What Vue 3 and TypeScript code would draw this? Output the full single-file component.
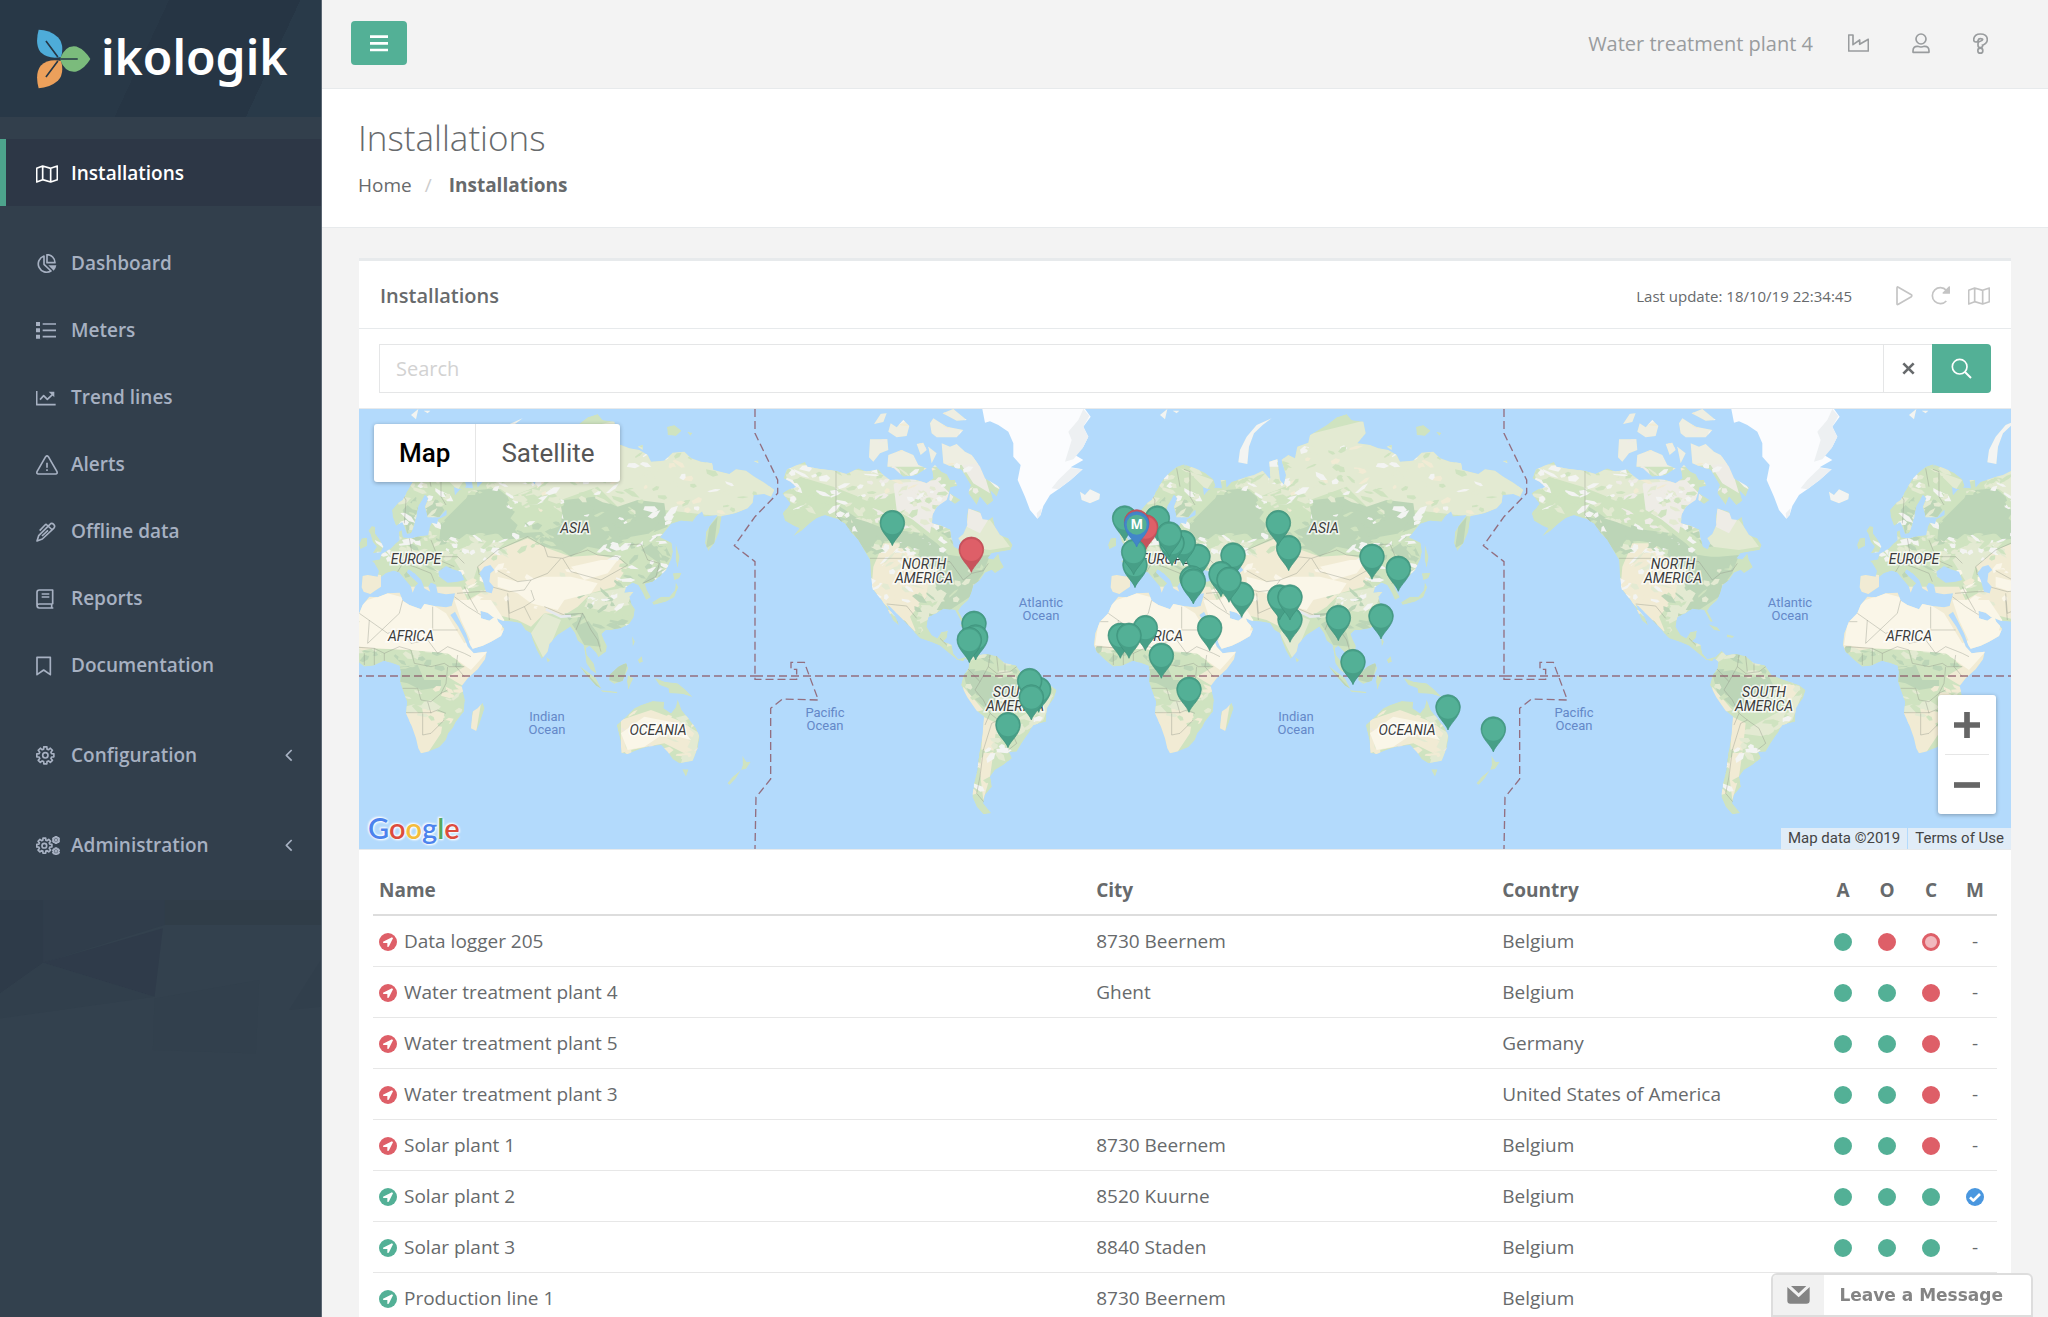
<script setup lang="ts">
import { ref } from 'vue'

type Tone = 'green' | 'red' | 'hollow'

interface NavItem {
  label: string
  icon: string
  active?: boolean
  expandable?: boolean
}

interface Installation {
  name: string
  city: string
  country: string
  marker: 'green' | 'red'
  states: Tone[]
  maintained?: boolean
}

interface Shard {
  d: string
  fill: string
}

// Outline of a cog wheel with the given centre, radius and number of teeth.
function cog(cx: number, cy: number, r: number, teeth: number): string {
  const points: string[] = []
  const step = (Math.PI * 2) / teeth
  for (let i = 0; i < teeth; i++) {
    const a = i * step - Math.PI / 2
    const spots: [number, number][] = [[-0.34, 0.74], [-0.22, 1], [0.22, 1], [0.34, 0.74]]
    for (const [offset, reach] of spots) {
      const x = cx + Math.cos(a + offset * step) * r * reach
      const y = cy + Math.sin(a + offset * step) * r * reach
      points.push(`${x.toFixed(1)} ${y.toFixed(1)}`)
    }
  }
  return `M${points.join('L')}Z`
}

const icons: Record<string, { w: number; h: number; body: string }> = {
  map: { w: 66, h: 54, body: '<path d="M2 10L20 3L44 10L64 3V44L44 51L20 44L2 51ZM20 3V44M44 10V51"/>' },
  pie: { w: 63, h: 60, body: '<path d="M24 6A25 25 0 1 0 45 51L24 31ZM33 2A24 24 0 0 1 57 26H33Z"/><path d="M37 34H61Q60 44 53 50Z" fill="currentColor" stroke="none"/>' },
  list: { w: 60, h: 51, body: '<path d="M20 6H60M20 25H60M20 44H60"/><path d="M0 0H12V12H0ZM0 19H12V31H0ZM0 38H12V50H0Z" fill="currentColor" stroke="none"/>' },
  trend: { w: 60, h: 48, body: '<path d="M2 3V44H59M12 29L23 17L34 28L50 13"/><path d="M38 5H55V22Z" fill="currentColor" stroke="none"/>' },
  alert: { w: 66, h: 60, body: '<path d="M29 5Q33 0 37 5L63 50Q65 57 59 57H7Q1 57 3 50ZM33 23V38M33 43V48" stroke-width="5"/>' },
  pen: { w: 60, h: 60, body: '<path d="M3 57L8 41L42 7Q47 1 53 7Q59 13 53 19L19 51ZM11 26L27 9Q30 6 33 9L49 24M36 25L18 42"/>' },
  book: { w: 54, h: 60, body: '<path d="M50 46V3H10Q3 3 3 10V49Q3 57 10 57H52M3 50Q3 45 10 45H50M47 46V57M17 15H40M17 24H40"/>' },
  bookmark: { w: 48, h: 60, body: '<path d="M3 4H43V56L23 42L3 56Z"/>' },
  gear: { w: 57, h: 57, body: `<path d="${cog(28, 28, 26, 8)}"/><circle cx="28" cy="28" r="8"/>` },
  gears: { w: 72, h: 57, body: `<path d="${cog(25, 29, 23, 8)}"/><circle cx="25" cy="29" r="7"/><path d="${cog(60, 12, 10, 6)}${cog(60, 46, 10, 6)}"/><circle cx="60" cy="12" r="2"/><circle cx="60" cy="46" r="2"/>` },
  left: { w: 24, h: 39, body: '<path d="M20 3L4 19L20 35" stroke-width="5"/>' },
  bars: { w: 54, h: 51, body: '<path d="M0 5H54M0 25H54M0 45H54" stroke-width="8"/>' },
  industry: { w: 63, h: 54, body: '<path d="M2 51V3H15V32L35 18V31L61 16V51Z" stroke-width="5"/>' },
  user: { w: 54, h: 63, body: '<circle cx="27" cy="18" r="15" stroke-width="5"/><path d="M3 58V54Q3 39 17 40Q27 44 37 40Q51 39 51 54V58Z" stroke-width="5"/>' },
  help: { w: 45, h: 63, body: '<path d="M9 20Q10 10 22 10Q36 10 36 20Q36 27 22 32V37" stroke-width="19" stroke-linecap="round"/><circle cx="22" cy="53" r="10" fill="currentColor" stroke="none"/><path d="M9 20Q10 10 22 10Q36 10 36 20Q36 27 22 32V37" stroke="#f3f3f3" stroke-width="9" stroke-linecap="round"/><circle cx="22" cy="53" r="5" fill="#f3f3f3" stroke="none"/>' },
  play: { w: 51, h: 60, body: '<path d="M3 6Q3 1 7 4L46 26Q49 29 46 32L7 55Q3 57 3 53Z"/>' },
  redo: { w: 57, h: 57, body: '<path d="M46 13A24 24 0 1 0 46 45" stroke-width="5"/><path d="M37 21H55V3Z" fill="currentColor"/>' },
  close: { w: 39, h: 39, body: '<path d="M4 4L35 35M35 4L4 35" stroke-width="8"/>' },
  search: { w: 63, h: 63, body: '<circle cx="26" cy="26" r="22" stroke-width="5"/><path d="M42 42L60 60" stroke-width="6"/>' },
  plus: { w: 78, h: 78, body: '<path d="M0 39H78M39 0V78" stroke-width="17"/>' },
  minus: { w: 78, h: 78, body: '<path d="M0 39H78" stroke-width="17"/>' },
  place: { w: 54, h: 54, body: '<circle cx="27" cy="27" r="27" fill="currentColor" stroke="none"/><path d="M39 13L12 26Q11 29 14 30H25V41Q28 43 30 40L42 16Z" fill="#fff" stroke="none"/>' },
  check: { w: 54, h: 54, body: '<circle cx="27" cy="27" r="27" fill="currentColor" stroke="none"/><path d="M12 28L22 38L42 18" stroke="#fff" stroke-width="8"/>' },
  mail: { w: 69, h: 54, body: '<path d="M12 0H58L35 22ZM1 3L35 34L68 3V44Q68 53 58 53H10Q1 53 1 44Z" fill="currentColor" stroke="none"/>' },
}

const navGroups: NavItem[][] = [
  [{ label: 'Installations', icon: 'map', active: true }],
  [
    { label: 'Dashboard', icon: 'pie' },
    { label: 'Meters', icon: 'list' },
    { label: 'Trend lines', icon: 'trend' },
    { label: 'Alerts', icon: 'alert' },
    { label: 'Offline data', icon: 'pen' },
    { label: 'Reports', icon: 'book' },
    { label: 'Documentation', icon: 'bookmark' },
  ],
  [{ label: 'Configuration', icon: 'gear', expandable: true }],
  [{ label: 'Administration', icon: 'gears', expandable: true }],
]

const rows: Installation[] = [
  { name: 'Data logger 205', city: '8730 Beernem', country: 'Belgium', marker: 'red', states: ['green', 'red', 'hollow'] },
  { name: 'Water treatment plant 4', city: 'Ghent', country: 'Belgium', marker: 'red', states: ['green', 'green', 'red'] },
  { name: 'Water treatment plant 5', city: '', country: 'Germany', marker: 'red', states: ['green', 'green', 'red'] },
  { name: 'Water treatment plant 3', city: '', country: 'United States of America', marker: 'red', states: ['green', 'green', 'red'] },
  { name: 'Solar plant 1', city: '8730 Beernem', country: 'Belgium', marker: 'red', states: ['green', 'green', 'red'] },
  { name: 'Solar plant 2', city: '8520 Kuurne', country: 'Belgium', marker: 'green', states: ['green', 'green', 'green'], maintained: true },
  { name: 'Solar plant 3', city: '8840 Staden', country: 'Belgium', marker: 'green', states: ['green', 'green', 'green'] },
  { name: 'Production line 1', city: '8730 Beernem', country: 'Belgium', marker: 'green', states: ['green', 'green', 'green'] },
]

const query = ref('')

// Coastlines, at three units to the pixel.
const americas = [
  'M100 235L112 208L165 185L172 200L215 208L255 212L290 222L325 205L350 215L385 208L400 225L420 240L470 238L500 240L530 250L550 235L545 205L555 195L575 215L590 222L600 240L615 240L622 258L602 262L595 285L590 300L560 320L548 345L546 370L575 378L600 388L603 410L612 440L626 447L634 430L625 415L640 402L652 375L650 352L655 325L690 335L698 358L715 360L728 350L735 380L750 405L775 415L788 435L782 450L750 455L725 460L712 475L730 478L745 460L750 480L762 502L735 520L725 510L705 518L690 540L670 555L665 575L655 600L635 618L625 632L642 665L634 665L615 630L580 626L560 640L535 650L530 680L545 705L562 715L574 696L594 692L590 715L580 724L605 735L610 760L625 778L648 770L640 784L622 780L600 762L570 737L545 727L510 715L490 692L465 665L440 640L418 618L410 614L420 632L436 650L448 677L430 662L415 632L395 600L368 568L362 520L360 480L345 455L325 420L305 400L285 370L260 356L225 345L200 355L180 370L155 392L128 410L148 385L132 378L105 362L98 340L122 312L97 280L118 268L140 262L122 245Z',
  'M645 775L668 752L680 765L710 762L740 768L765 790L798 796L818 825L850 838L900 855L920 870L912 895L890 925L888 965L850 975L835 1000L815 1030L800 1055L778 1056L785 1075L760 1095L735 1110L720 1130L726 1160L705 1185L700 1210L724 1240L700 1243L680 1220L667 1190L672 1150L682 1110L690 1050L698 1000L702 950L680 932L652 892L633 855L640 828L655 805L658 785Z',
  'M575 130L600 140L620 132L645 155L665 165L690 200L705 235L750 262L740 290L722 272L730 302L712 316L690 290L680 315L655 280L662 255L635 210L605 200L580 190Z',
  'M415 165L455 150L490 165L505 195L530 205L500 225L460 230L432 205L412 200Z',
  'M360 118L412 118L415 150L390 160L370 185L357 172Z',
  'M372 72L392 42L410 40L400 66ZM415 95L422 70L440 82L460 60L478 78L470 108L440 112ZM500 132L520 128L530 150L512 165ZM540 70L550 55L590 80L640 90L620 112L560 112L545 100ZM578 40L610 27L650 60L620 62ZM535 140L560 160L545 190ZM600 280L632 300L615 312L598 300Z',
  'M627 672L655 682L665 694L645 690ZM683 703L706 708L700 714L684 712Z',
]
const iceCap = 'M697 27L705 68L720 64L745 75L775 95L790 130L790 170L812 195L803 240L825 290L840 330L862 356L872 345L880 318L900 285L925 268L962 240L998 208L962 202L1000 180L975 165L1000 140L1015 110L1000 80L1022 50L1005 27Z'
const iceShade = 'M1000 27L1018 48L1000 80L1015 110L998 145L970 178L945 185L965 120L955 95L985 60ZM998 208L962 204L925 240L905 265L925 268L962 240ZM862 356L872 345L875 325L860 340Z'
const eurasia = [
  'M185 350L183 330L200 310L215 300L232 268L248 240L268 218L290 200L312 193L345 205L375 218L400 238L407 258L392 270L370 262L372 285L385 270L402 262L425 265L422 240L438 240L440 262L455 245L480 238L502 230L522 225L548 212L572 240L568 185L592 178L600 240L612 255L618 225L605 180L625 165L645 175L652 140L685 128L690 105L740 75L770 52L800 42L815 60L850 65L857 100L832 130L870 135L895 145L925 150L950 165L960 185L1000 182L1025 158L1060 155L1080 175L1110 185L1143 190L1147 210L1195 222L1215 208L1245 212L1270 230L1300 248L1330 270L1320 290L1300 282L1268 285L1265 308L1250 325L1215 340L1172 348L1165 395L1150 430L1132 453L1122 430L1125 395L1142 368L1160 345L1118 350L1114 332L1095 350L1085 365L1050 362L1020 372L998 400L988 412L1022 428L1026 455L1020 480L1005 510L985 530L965 545L942 552L948 570L960 592L945 600L935 578L922 556L905 548L885 562L880 578L908 575L895 590L900 610L912 628L908 652L895 672L870 685L842 690L825 690L812 702L818 718L828 738L825 755L802 772L795 758L775 738L765 745L768 765L788 790L797 822L780 810L766 790L762 760L757 735L740 722L732 700L718 680L700 692L680 705L655 732L650 755L632 777L618 752L605 720L600 700L583 690L570 670L545 665L515 662L485 650L470 638L448 632L450 655L475 662L495 648L502 665L520 685L510 708L480 725L455 737L425 746L418 735L405 700L385 660L372 635L358 645L382 680L400 715L410 740L428 760L467 755L462 778L440 808L410 835L392 858L402 900L398 935L375 965L365 985L352 1000L345 1020L325 1042L295 1054L270 1060L262 1045L255 1015L243 980L225 940L228 905L215 870L207 845L210 815L205 797L180 788L160 782L130 796L100 800L75 780L50 755L42 735L46 700L60 665L85 640L95 615L115 590L140 592L170 580L206 578L215 602L235 615L270 628L280 612L310 618L345 622L362 618L370 590L372 580L345 583L320 578L315 555L300 548L292 560L298 575L280 565L270 540L250 520L232 508L228 518L262 550L252 560L245 578L240 560L218 535L205 518L188 512L165 520L150 532L150 560L132 572L118 582L98 575L92 562L95 528L110 525L140 530L143 512L130 490L122 482L147 478L152 462L178 446L195 430L206 420L203 395L212 390L216 412L240 415L268 408L292 405L296 380L302 368L318 372L322 358L346 345L346 330L325 352L290 352L282 320L292 295L282 285L262 318L256 350L250 375L240 400L228 402L220 380L214 365L195 378Z',
  'M122 378L133 380L132 400L147 420L157 440L150 456L125 460L137 440L125 425L118 402L112 392ZM92 415L108 413L108 438L88 448L84 435Z',
  'M575 55L548 75L522 100L507 140L502 192L475 187L480 150L500 110L530 75Z',
  'M455 908L461 925L446 970L436 993L420 985L424 935L440 925Z',
  'M857 975L885 950L910 925L930 915L965 903L1000 905L998 925L1020 940L1034 922L1040 898L1052 930L1072 955L1095 985L1106 1010L1100 1045L1085 1082L1045 1090L1025 1078L1010 1055L990 1035L950 1040L920 1050L890 1062L872 1060L868 1020Z',
  'M1053 1108L1073 1108L1065 1131ZM1234 1066L1246 1085L1260 1085L1245 1107L1230 1110L1235 1095ZM1230 1110L1215 1135L1196 1155L1189 1150L1205 1130Z',
  'M970 833L1002 845L1040 850L1062 868L1086 892L1055 882L1015 880L1012 865L985 855ZM835 825L862 800L885 788L892 805L875 842L850 852L835 842ZM745 797L770 815L795 835L812 867L795 857L765 825ZM808 870L860 875L858 880L815 876ZM890 825L908 835L900 850L892 870L888 845ZM903 708L912 725L905 742ZM920 780L932 768L936 785L925 790Z',
  'M1015 590L1032 570L1034 545L1042 562L1030 592L1005 605L968 615L963 607L990 590ZM1025 520L1052 518L1045 535L1030 541ZM1034 430L1046 470L1040 505L1034 480ZM645 770L658 780L650 788Z',
  'M0 275L15 285L30 268L60 282L58 298L30 310L5 300Z',
  'M1008 80L1030 75L1052 92L1035 108L1010 105ZM920 140L935 135L935 150ZM1068 95L1085 98L1078 108ZM1268 183L1282 180L1282 190ZM240 45L262 27L255 58ZM278 32L298 32L290 40Z',
]
const inlandWater = 'M460 500L478 495L490 510L478 520L475 545L488 560L482 580L465 575L455 540L445 520ZM325 530L322 515L345 498L365 508L390 515L400 540L380 545L350 548ZM312 195L318 197L315 200Z'

// Country borders.
const americaBorders = 'M258 212V345L305 400M360 475H520L600 485L640 540L665 520L700 512L715 490M410 612L470 618L500 655M652 805L690 845L675 870L700 900L720 940L705 975M690 845L715 800L740 820L780 815L800 800M720 765L715 800M740 768L745 815M765 790V815M725 970L700 1050L690 1130L680 1180L705 1210M725 970L745 960L780 985L800 1030L775 1050M720 940L745 960M570 715L590 735'
const eurasiaBorders = 'M440 500L500 450L545 430L590 410L640 440L650 470L695 475L770 450L800 465L860 470L890 495M440 500L445 525M695 475L720 515L810 540L890 495M890 435L930 432L950 480L985 490L975 530L935 550M500 512L560 545L600 540L650 520L690 475M480 560L535 575L580 570L600 540M530 580L535 640L580 620L610 600L600 570M580 620L600 660M640 620L700 645L755 640L780 690L800 720L810 755M755 640L735 690M400 560L420 600L440 635M370 590L410 620L450 645M378 580L440 575L480 575M535 660L530 600M200 515L215 490L250 500L300 520L310 545M200 480L250 480L300 470L370 500M235 415L245 470M300 420L320 470L380 470L400 490M205 270L225 300L220 370M290 205L300 260M312 208L330 215V290L345 315M170 350M215 600L205 640L110 730M85 640L170 700L205 690M110 730L115 660M305 620V690H380M205 690L240 730L290 720L305 690M60 665H85M50 740L130 745L160 760L205 740L240 750L250 790L300 800L340 790L355 800L400 800M290 720L320 760L350 740L400 760L420 770M215 865H260L270 900L300 905L330 880L350 870M225 938H300L320 930L345 940M275 940V1005L300 1000L340 960M290 905L300 940M350 800L345 850L330 880M380 765L375 800L400 830M100 760V795M130 745V795M160 760V785'

const darkEurasia = 'M325 420L330 370L370 330L400 300L440 270L500 265L530 290L545 330L530 360L560 400L640 395L690 370L700 300L790 290L860 320L920 300L1000 310L1010 380L960 400L900 410L870 430L820 450L770 440L720 470L690 450L640 440L600 410L520 420L500 400L440 410L400 400L360 430L325 435ZM282 320L292 295L320 300L340 330L325 352L290 352ZM215 330L255 290L262 320L240 400L228 400ZM930 430L1000 430L1020 470L965 545L935 550L985 490ZM700 640L755 640L800 700L810 740L760 735L735 690ZM207 800L260 795L280 840L330 840L330 860L270 870L230 850L208 845ZM835 800L890 790L875 850L835 840ZM745 797L812 867L795 857ZM1135 380L1160 350L1150 430L1125 445Z'
// Unbroken taiga, drawn above the grain.
const taiga = 'M330 375L365 345L400 310L410 285L440 285L470 268L505 275L530 295L525 320L552 335L538 355L560 375L548 398L510 405L480 395L440 400L415 395L385 418L360 410L345 425L328 415ZM690 320L720 305L760 310L790 320L785 340L740 350L800 350L830 330L870 345L850 370L810 385L835 410L800 445L770 435L745 455L700 445L690 410L660 405L700 370ZM860 380L900 365L950 350L985 365L960 395L900 395ZM930 450L960 430L985 460L990 500L965 535L950 530L985 490Z'
const darkAmerica = 'M270 320L360 380L440 390L520 400L560 430L600 470L660 470L720 465L700 520L670 560L660 590L600 630L560 630L590 580L560 560L540 500L470 430L400 420L430 490L400 500L380 440L350 460L310 400L260 350ZM640 820L700 810L760 830L810 830L830 870L800 930L740 920L700 920L655 880ZM660 1090L690 1060L680 1120Z'
const borealAmerica = 'M300 350L350 365L400 385L440 392L500 405L540 430L530 455L480 440L440 420L395 425L380 405L370 440L345 440L325 400ZM530 460L600 465L660 475L700 470L690 505L640 510L590 490L560 500ZM650 830L700 815L740 835L790 835L800 870L770 880L720 900L680 885Z'
const sandAreas = 'M40 560L90 520L150 525L150 565L110 590L40 590ZM40 560L390 560L410 600L480 560L440 500L500 450L590 415L650 445L720 470L800 465L870 480L890 500L850 560L780 580L740 620L700 645L640 640L600 680L560 660L480 640L530 700L480 780L400 860L350 830L400 800L350 760L240 750L130 745L40 760ZM215 940L300 930L340 940L330 1000L290 1060L250 1060ZM430 910L450 910L435 1000L415 1000ZM870 960L960 930L1040 960L1090 1000L1060 1060L1000 1030L900 1050L870 1060Z'
const creamAreas = 'M60 640L110 600L170 580L310 618L345 640L400 730L460 700L520 690L500 740L465 760L420 810L350 760L240 750L130 745L45 735ZM370 600L480 600L520 660L500 720L430 745L390 660ZM500 530L560 545L640 530L720 530L800 550L780 580L700 600L680 630L600 610L560 580L500 560ZM870 1000L940 950L1040 970L1080 1020L1000 1000L940 1040L890 1050ZM720 500L810 480L860 480L830 520L760 540Z'
const sandAmerica = 'M370 500L400 430L470 430L490 480L540 510L530 590L480 650L500 700L470 670L400 610L365 560ZM700 950L740 970L730 1060L720 1130L700 1200L690 1120ZM640 860L700 930L680 935L640 890ZM840 860L880 850L900 870L870 910Z'
const tundra = 'M430 250L560 240L610 290L590 330L550 340L540 400L490 360L440 330ZM655 325L720 350L690 400L650 380ZM600 140L690 180L720 280L670 250Z'
const lightAreas = 'M460 230L700 100L860 60L1330 200L1330 300L1180 350L1000 330L860 320L800 260L690 300L640 250L540 290ZM370 480L440 430L520 430L440 500L420 560ZM640 640L690 660L640 780L600 700ZM780 580L900 560L900 600L850 640L760 620ZM220 920L300 900L330 920L290 960L230 950ZM1040 960L1106 1000L1090 1085L1050 1090L1070 1020ZM300 205L400 240L380 270L340 230Z'
const lightAmerica = 'M95 190L260 200L520 240L540 250L430 280L350 300L250 260L150 230L120 260ZM560 400L720 360L780 440L720 450L640 440ZM540 490L600 580L560 640L500 650L530 590ZM720 1000L850 930L910 880L880 960L800 1010ZM480 370L600 470L560 490L470 400Z'

// Small deterministic fragments that give the terrain its grain.
let seed = 41
function next(): number {
  seed = (seed * 16807) % 2147483647
  return seed / 2147483647
}
function grain(count: number, x: number, y: number, w: number, h: number, fills: string[]): Shard[] {
  return Array.from({ length: count }, () => {
    const cx = x + next() * w
    const cy = y + next() * h
    const turn = (next() - 0.5) * 1.6
    const long = 10 + next() * 24
    const thin = 3 + next() * 8
    const pts = [0, 1, 2, 3, 4].map((i) => {
      const a = (i / 5) * Math.PI * 2
      const px = Math.cos(a) * long * (0.5 + next() * 0.5)
      const py = Math.sin(a) * thin
      return `${Math.round(cx + px * Math.cos(turn) - py * Math.sin(turn))} ${Math.round(cy + px * Math.sin(turn) + py * Math.cos(turn))}`
    })
    return { d: `M${pts.join('L')}Z`, fill: fills[Math.floor(next() * fills.length)] }
  })
}

const white = '#f3f4f2'
const pale = '#e3ead2'
const leaf = '#cfe3c0'
const forest = '#bcd5b7'
const sand = '#f1ebd4'
const eurasiaGrain: Shard[] = [
  ...grain(130, 560, 130, 780, 210, [white, leaf, pale, leaf, pale, sand]),
  ...grain(60, 420, 235, 260, 90, [white, leaf, pale]),
  ...grain(60, 540, 340, 500, 110, [white, leaf, forest, leaf]),
  ...grain(40, 350, 400, 180, 80, [white, leaf, pale]),
  ...grain(50, 190, 200, 160, 220, [white, leaf, pale]),
  ...grain(50, 140, 410, 240, 120, [white, leaf, forest, pale]),
  ...grain(40, 380, 500, 340, 130, [sand, '#faf6e9', pale]),
  ...grain(35, 720, 560, 190, 120, [white, leaf, forest, pale]),
  ...grain(40, 850, 420, 170, 130, [leaf, forest, white]),
  ...grain(30, 50, 750, 350, 60, [leaf, forest, pale]),
  ...grain(26, 210, 860, 190, 130, [leaf, pale, sand]),
  ...grain(30, 860, 920, 240, 160, [pale, sand, '#ece8e0']),
]
const americaGrain: Shard[] = [
  ...grain(90, 100, 190, 270, 200, [white, leaf, pale, leaf]),
  ...grain(60, 350, 210, 230, 170, [pale, '#eeece6', leaf]),
  ...grain(50, 330, 380, 300, 80, [white, leaf, forest]),
  ...grain(45, 360, 440, 160, 200, [sand, pale, white]),
  ...grain(40, 500, 480, 220, 150, [leaf, forest, pale]),
  ...grain(50, 360, 27, 380, 280, [white, sand, '#eeece6']),
  ...grain(25, 430, 640, 180, 120, [leaf, pale, forest]),
  ...grain(40, 650, 760, 260, 130, [leaf, forest, pale]),
  ...grain(30, 720, 880, 190, 200, [leaf, pale, white]),
  ...grain(16, 660, 1040, 70, 200, [white, leaf, sand]),
]

const dateLine = 'M1272 27V100L1340 240V280L1272 350L1210 437L1272 485V838H1397V808H1380V787H1420L1462 900L1355 897L1319 925V1137L1275 1192L1272 1347'

const worldOffsets = [-357, 392, 1141]

const continents = [
  { x: 174, y: 169, lines: ['NORTH', 'AMERICA'] },
  { x: 265, y: 297, lines: ['SOUTH', 'AMERICA'] },
  { x: 574, y: 133, lines: ['ASIA'] },
  { x: 415, y: 164, lines: ['EUROPE'] },
  { x: 410, y: 241, lines: ['AFRICA'] },
  { x: 657, y: 335, lines: ['OCEANIA'] },
]
const oceans = [
  { x: 291, y: 207, lines: ['Atlantic', 'Ocean'] },
  { x: 75, y: 317, lines: ['Pacific', 'Ocean'] },
  { x: 546, y: 321, lines: ['Indian', 'Ocean'] },
]

// Pin tips, in the same units as the Eurasian coastline.
const pins: [number, number, string][] = [
  [-563, 437, 'green'], [-326, 517, 'red'], [-318, 739, 'green'], [-313, 780, 'green'], [-332, 788, 'green'],
  [-124, 937, 'green'], [-151, 911, 'green'], [-146, 960, 'green'], [-216, 1043, 'green'],
  [134, 423, 'green'], [232, 423, 'green'], [197, 450, 'red'], [170, 435, 'red'],
  [165, 563, 'green'], [161, 524, 'green'], [354, 538, 'green'], [310, 497, 'green'], [276, 497, 'green'], [268, 471, 'green'],
  [336, 603, 'green'], [340, 612, 'green'], [459, 534, 'green'], [485, 652, 'green'], [423, 590, 'green'], [447, 607, 'green'],
  [626, 512, 'green'], [595, 437, 'green'], [876, 538, 'green'], [955, 574, 'green'], [630, 727, 'green'],
  [599, 660, 'green'], [630, 660, 'green'], [775, 722, 'green'], [903, 717, 'green'], [389, 752, 'green'],
  [196, 752, 'green'], [121, 775, 'green'], [147, 775, 'green'], [244, 835, 'green'], [327, 937, 'green'],
  [819, 854, 'green'], [1104, 990, 'green'], [1240, 1056, 'green'], [170, 441, 'blue'],
]
</script>

<template>
  <div class="app">
    <aside class="sidebar">
      <a class="brand" href="#">
        <svg class="brand-mark" viewBox="0 0 166 180" aria-hidden="true">
          <path d="M8 2Q40 2 66 24Q86 44 76 84Q38 92 14 70Q-4 46 8 2Z" fill="#4eacd9" />
          <path d="M8 178Q40 178 66 156Q86 136 76 96Q38 88 14 110Q-4 134 8 178Z" fill="#eca05b" />
          <path d="M164 90Q148 62 122 52Q88 46 72 90Q88 134 122 128Q148 118 164 90Z" fill="#7bbb7c" />
          <path d="M66 84L30 36M66 96L30 144M72 90H126" stroke="#263746" stroke-width="5" />
        </svg>
        <span>ikologik</span>
      </a>
      <nav class="nav">
        <ul v-for="(group, g) in navGroups" :key="g">
          <li v-for="item in group" :key="item.label" :class="{ active: item.active }">
            <a href="#">
              <span class="nav-icon">
                <svg class="icon" :width="icons[item.icon].w / 3" :height="icons[item.icon].h / 3" :viewBox="`0 0 ${icons[item.icon].w} ${icons[item.icon].h}`" v-html="icons[item.icon].body" />
              </span>
              <span class="nav-label">{{ item.label }}</span>
              <svg v-if="item.expandable" class="icon" width="8" height="13" viewBox="0 0 24 39" v-html="icons.left.body" />
            </a>
          </li>
        </ul>
      </nav>
      <svg class="facets" viewBox="0 0 966 1250" preserveAspectRatio="none" aria-hidden="true">
        <path d="M0 0H130V188L0 280Z" fill="#2e3b49" />
        <path d="M130 0H495V75L130 188Z" fill="#303d4b" />
        <path d="M130 188L490 85L465 290Z" fill="#2f3b4a" />
        <path d="M0 280L130 188L465 290L0 355Z" fill="#313f4c" />
        <path d="M495 0H966V75H495Z" fill="#303d48" />
        <path d="M465 295L780 240L770 460L460 450Z" fill="#32404d" />
        <path d="M966 180L870 330L966 320Z" fill="#313f4c" />
      </svg>
    </aside>

    <main class="main">
      <header class="topbar">
        <button class="menu" type="button" aria-label="Toggle menu">
          <svg class="icon" width="18" height="17" viewBox="0 0 54 51" v-html="icons.bars.body" />
        </button>
        <div class="account">
          <span>Water treatment plant 4</span>
          <a v-for="name in ['industry', 'user', 'help']" :key="name" href="#" :aria-label="name">
            <svg class="icon" :width="icons[name].w / 3" :height="icons[name].h / 3" :viewBox="`0 0 ${icons[name].w} ${icons[name].h}`" v-html="icons[name].body" />
          </a>
        </div>
      </header>

      <section class="heading">
        <h1>Installations</h1>
        <ol class="crumbs">
          <li><a href="#">Home</a></li>
          <li class="slash">/</li>
          <li><strong>Installations</strong></li>
        </ol>
      </section>

      <section class="panel">
        <div class="panel-title">
          <h2>Installations</h2>
          <div class="tools">
            <span>Last update: 18/10/19 22:34:45</span>
            <button v-for="name in ['play', 'redo', 'map']" :key="name" type="button" :aria-label="name">
              <svg class="icon" :width="icons[name].w / 3" :height="icons[name].h / 3" :viewBox="`0 0 ${icons[name].w} ${icons[name].h}`" v-html="icons[name].body" />
            </button>
          </div>
        </div>

        <form class="search" @submit.prevent>
          <input v-model="query" type="text" placeholder="Search" aria-label="Search" />
          <button class="clear" type="button" aria-label="Clear" @click="query = ''">
            <svg class="icon" width="13" height="13" viewBox="0 0 39 39" v-html="icons.close.body" />
          </button>
          <button class="go" type="submit" aria-label="Search">
            <svg class="icon" width="21" height="21" viewBox="0 0 63 63" v-html="icons.search.body" />
          </button>
        </form>

        <div class="map">
          <svg class="world" viewBox="0 0 1654 440" preserveAspectRatio="xMidYMid slice">
            <defs>
              <clipPath id="america-clip"><path :d="americas.join('')" /></clipPath>
              <clipPath id="eurasia-clip"><path :d="eurasia.join('')" /></clipPath>
              <g id="world-tile">
                <g transform="scale(0.33333)">
                  <path :d="iceCap" fill="#fbfcfe" />
                  <path :d="iceShade" fill="#edf0f2" />
                  <g clip-path="url(#america-clip)">
                    <path :d="americas.join('')" :fill="leaf" />
                    <path :d="lightAmerica" :fill="pale" />
                    <path :d="darkAmerica" :fill="forest" />
                    <path :d="sandAmerica" :fill="sand" />
                    <path :d="tundra" fill="#eeece6" />
                    <path d="M350 27H760V190H700L560 200H350Z" fill="#eeeee2" />
                    <path v-for="(s, i) in americaGrain" :key="i" :d="s.d" :fill="s.fill" />
                    <path :d="borealAmerica" :fill="forest" />
                    <path :d="americaBorders" class="border" />
                  </g>
                  <g transform="translate(990 0)">
                    <g clip-path="url(#eurasia-clip)">
                      <path :d="eurasia.join('')" :fill="leaf" />
                      <path :d="lightAreas" :fill="pale" />
                      <path d="M470 40H600V200H470ZM0 260H70V320H0ZM230 20H300V60H230Z" :fill="white" />
                      <path :d="sandAreas" :fill="sand" />
                      <path :d="darkEurasia" :fill="forest" />
                      <path v-for="(s, i) in eurasiaGrain" :key="i" :d="s.d" :fill="s.fill" />
                      <path :d="taiga" :fill="forest" />
                      <path :d="creamAreas" fill="#faf6e8" />
                      <path :d="eurasiaBorders" class="border" />
                    </g>
                    <path d="M645 628L690 650L720 648" fill="none" stroke="#e6e9ee" stroke-width="8" />
                    <path :d="inlandWater" fill="#b3dafc" />
                    <path :d="dateLine" class="dateline" />
                  </g>
                  <path d="M15 828H2262" class="equator" />
                </g>
                <g class="continents">
                  <text v-for="c in continents" :key="c.lines[0]" :y="c.y">
                    <tspan v-for="(line, i) in c.lines" :key="line" :x="c.x" :dy="i * 14">{{ line }}</tspan>
                  </text>
                </g>
                <g class="oceans">
                  <text v-for="o in oceans" :key="o.lines[0]" :y="o.y">
                    <tspan v-for="(line, i) in o.lines" :key="line" :x="o.x" :dy="i * 13">{{ line }}</tspan>
                  </text>
                </g>
              </g>
            </defs>
            <use v-for="x in worldOffsets" :key="x" href="#world-tile" :x="x" y="-9" />
            <g transform="translate(722 -9) scale(0.33333)">
              <g v-for="([x, y, tone], i) in pins" :key="i" :class="['pin', tone]" :transform="`translate(${x} ${y})`">
                <path d="M0 0C-6 -20 -37 -40 -37 -69A37 37 0 0 1 37 -69C37 -40 6 -20 0 0Z" />
                <circle cy="-67" r="33" />
                <text v-if="tone === 'blue'" y="-54">M</text>
              </g>
            </g>
          </svg>

          <div class="map-type">
            <button type="button" class="chosen">Map</button>
            <button type="button">Satellite</button>
          </div>
          <div class="zoom">
            <button type="button" aria-label="Zoom in"><svg class="icon" width="26" height="26" viewBox="0 0 78 78" v-html="icons.plus.body" /></button>
            <button type="button" aria-label="Zoom out"><svg class="icon" width="26" height="26" viewBox="0 0 78 78" v-html="icons.minus.body" /></button>
          </div>
          <a class="google" href="#" aria-label="Google"><span class="b">G</span><span class="r">o</span><span class="y">o</span><span class="b">g</span><span class="g">l</span><span class="r">e</span></a>
          <div class="credits"><span>Map data ©2019</span><a href="#">Terms of Use</a></div>
        </div>

        <div class="table-wrap">
          <table>
            <colgroup><col /><col class="city" /><col class="country" /><col class="state" /><col class="state" /><col class="state" /><col class="state" /></colgroup>
            <thead>
              <tr><th>Name</th><th>City</th><th>Country</th><th class="mid">A</th><th class="mid">O</th><th class="mid">C</th><th class="mid">M</th></tr>
            </thead>
            <tbody>
              <tr v-for="row in rows" :key="row.name">
                <td>
                  <span class="name">
                    <svg :class="['icon', row.marker]" width="18" height="18" viewBox="0 0 54 54" v-html="icons.place.body" />
                    {{ row.name }}
                  </span>
                </td>
                <td>{{ row.city }}</td>
                <td>{{ row.country }}</td>
                <td v-for="(tone, i) in row.states" :key="i" class="mid"><span :class="['dot', tone]" /></td>
                <td class="mid">
                  <svg v-if="row.maintained" class="icon blue" width="18" height="18" viewBox="0 0 54 54" v-html="icons.check.body" />
                  <template v-else>-</template>
                </td>
              </tr>
            </tbody>
          </table>
        </div>
      </section>
    </main>

    <button class="chat" type="button">
      <span class="chat-icon"><svg class="icon" width="23" height="18" viewBox="0 0 69 54" v-html="icons.mail.body" /></span>
      <span class="chat-label">Leave a Message</span>
    </button>
  </div>
</template>

<style>
body {
  margin: 0;
  background: #f3f3f3;
}
</style>

<style scoped>
* {
  box-sizing: border-box;
}
.app {
  display: flex;
  height: 100vh;
  overflow: hidden;
  font: 19px/27px 'Open Sans', sans-serif;
  color: #676a6c;
}
a {
  color: inherit;
  text-decoration: none;
}
button {
  display: flex;
  align-items: center;
  justify-content: center;
  padding: 0;
  border: 0;
  background: none;
  color: inherit;
  font: inherit;
}
h1,
h2,
ul,
ol {
  margin: 0;
  padding: 0;
  list-style: none;
}
.icon {
  display: block;
  flex: none;
  fill: none;
  stroke: currentColor;
  stroke-width: 5;
  stroke-linejoin: round;
}

.sidebar {
  display: flex;
  flex: none;
  flex-direction: column;
  width: 322px;
  border-right: 1px solid #5b6773;
  background: #33414e;
}
.brand {
  display: flex;
  align-items: center;
  gap: 10px;
  height: 117px;
  padding-left: 36px;
  background: linear-gradient(115deg, #283847 45%, #263544 45%, #263544 80%, #293a49 80%);
  color: #fff;
  font: 600 48px/64px 'Noto Sans', sans-serif;
}
.brand span {
  padding-bottom: 4px;
}
.brand-mark {
  width: 55px;
  height: 60px;
  fill: none;
}
.nav {
  display: flex;
  flex-direction: column;
  gap: 23px;
  padding: 22px 0;
  background: #323f4c;
}
.nav a {
  display: flex;
  align-items: center;
  height: 67px;
  padding: 2px 28px 0 36px;
  color: #a7b1c2;
  font-weight: 600;
}
.nav .active a {
  padding-left: 30px;
  border-left: 6px solid #4da48c;
  background: #2d3746;
  color: #fff;
}
.nav-icon {
  width: 35px;
}
.nav-label {
  flex: 1;
}
.facets {
  display: block;
  flex: 1;
  width: 100%;
  min-height: 0;
}

.main {
  flex: 1;
  min-width: 0;
  background: #f3f3f3;
}
.topbar {
  display: flex;
  align-items: center;
  justify-content: space-between;
  height: 89px;
  padding: 0 60px 2px 29px;
  border-bottom: 1px solid #e7eaec;
}
.menu {
  width: 56px;
  height: 44px;
  border-radius: 4px;
  background: #53b096;
  color: #fff;
}
.account {
  display: flex;
  align-items: center;
  gap: 43px;
  color: #999c9e;
}
.account span {
  margin-right: -8px;
  font-size: 20px;
}
.heading {
  padding: 26px 36px 28px;
  border-bottom: 1px solid #e7eaec;
  background: #fff;
}
.heading h1 {
  font-size: 35px;
  font-weight: 300;
  line-height: 46px;
}
.crumbs {
  display: flex;
  margin-top: 11px;
}
.slash {
  padding: 0 17px 0 13px;
  color: #ccc;
}

.panel {
  margin: 30px 37px 0;
  border-top: 3px solid #e7eaec;
  background: #fff;
}
.panel-title {
  display: flex;
  align-items: center;
  justify-content: space-between;
  height: 68px;
  padding: 2px 21px 0;
  border-bottom: 1px solid #e7eaec;
}
.panel-title h2 {
  font-size: 20px;
  font-weight: 600;
}
.tools {
  display: flex;
  align-items: center;
  gap: 18px;
  color: #c4c4c4;
}
.tools span {
  margin-right: 26px;
  padding-top: 2px;
  color: #676a6c;
  font-size: 15px;
}
.search {
  display: flex;
  height: 80px;
  padding: 15px 20px;
  border-bottom: 1px solid #e7eaec;
}
.search input {
  flex: 1;
  min-width: 0;
  padding: 0 16px;
  border: 1px solid #e5e6e7;
  border-radius: 0;
  outline: 0;
  color: inherit;
  font: inherit;
  font-size: 20px;
}
.search input::placeholder {
  color: #d2d2d2;
}
.clear {
  width: 48px;
  border: solid #e5e6e7;
  border-width: 1px 0;
}
.go {
  width: 59px;
  border-radius: 0 4px 4px 0;
  background: #53b096;
  color: #fff;
}

.map {
  position: relative;
  height: 441px;
  overflow: hidden;
  border-bottom: 1px solid #e7eaec;
  background: #b3dafc;
  font-family: Roboto, sans-serif;
}
.world {
  display: block;
  width: 100%;
  height: 440px;
}
.border {
  fill: none;
  stroke: #8f9488;
  stroke-opacity: 0.6;
  stroke-width: 2;
}
.equator,
.dateline {
  fill: none;
  stroke: #8d5c6a;
  stroke-opacity: 0.85;
  stroke-width: 4;
  stroke-dasharray: 24 12;
}
.continents,
.oceans {
  font-family: Roboto, sans-serif;
  text-anchor: middle;
}
.continents {
  fill: #3c3c3c;
  stroke: #fff;
  stroke-opacity: 0.8;
  stroke-width: 3;
  paint-order: stroke;
  font-size: 14px;
  font-style: italic;
}
.oceans {
  fill: #6488c8;
  font-size: 13px;
}
.pin path {
  fill: #479f87;
  stroke: #3d8f79;
  stroke-width: 2;
}
.pin circle {
  fill: #53b096;
}
.pin.red path {
  fill: #c8535c;
  stroke: #bd4650;
}
.pin.red circle {
  fill: #de5f68;
}
.pin.blue path {
  fill: #4286c9;
  stroke: #3d7dc0;
}
.pin.blue circle {
  r: 30px;
}
.pin text {
  fill: #fff;
  font: 700 40px 'Open Sans', sans-serif;
  text-anchor: middle;
}
.map-type {
  position: absolute;
  top: 15px;
  left: 15px;
  display: flex;
  height: 58px;
  border-radius: 3px;
  background: #fff;
  box-shadow: 0 1px 4px rgb(0 0 0 / 30%);
  color: #565656;
  font-size: 26px;
}
.map-type button {
  padding: 0 25px;
}
.map-type .chosen {
  border-right: 1px solid #e6e6e6;
  color: #000;
  font-weight: 500;
}
.zoom {
  position: absolute;
  right: 15px;
  bottom: 35px;
  display: flex;
  flex-direction: column;
  align-items: center;
  width: 58px;
  border-radius: 3px;
  background: #fff;
  box-shadow: 0 1px 4px rgb(0 0 0 / 30%);
  color: #666;
}
.zoom button {
  width: 44px;
  height: 59px;
}
.zoom button + button {
  height: 60px;
  border-top: 1px solid #e6e6e6;
}
.google {
  position: absolute;
  bottom: 4px;
  left: 9px;
  font: 600 29px/34px Lato, sans-serif;
  text-shadow: 0 0 3px #fff, 1px 1px 2px #fff, -1px -1px 2px #fff;
}
.b {
  color: #4c83ed;
}
.r {
  color: #dc4c3e;
}
.y {
  color: #f3bc3c;
}
.g {
  color: #58a85c;
}
.credits {
  position: absolute;
  right: 0;
  bottom: 0;
  display: flex;
  gap: 1px;
  color: #444;
  font-size: 15px;
  line-height: 21px;
}
.credits > * {
  padding: 0 7px;
  background: #e0ecf7;
}

.table-wrap {
  padding: 14px 14px 0;
}
table {
  width: 100%;
  border-collapse: collapse;
  table-layout: fixed;
}
.city {
  width: 25%;
}
.country {
  width: 20%;
}
.state {
  width: 44px;
}
th,
td {
  height: 51px;
  padding: 2px 6px 0;
  border-bottom: 1px solid #e7e7e7;
  text-align: left;
}
th {
  border-bottom: 2px solid #ddd;
}
.mid {
  text-align: center;
}
.mid .icon {
  margin: 0 auto;
}
.name {
  display: flex;
  align-items: center;
  gap: 7px;
}
.dot {
  display: block;
  width: 18px;
  height: 18px;
  margin: 0 auto;
  border: 3px solid #53b096;
  border-radius: 50%;
  background: #53b096;
}
.dot.red {
  border-color: #de5f68;
  background: #de5f68;
}
.dot.hollow {
  border-color: #de5f68;
  background: #f1b9be;
}
.icon.green {
  color: #53b096;
}
.icon.red {
  color: #de5f68;
}
.icon.blue {
  color: #4a97df;
}

.chat {
  position: fixed;
  right: 15px;
  bottom: 0;
  align-items: stretch;
  height: 44px;
  overflow: hidden;
  border: 2px solid #ddd;
  border-radius: 6px 6px 0 0;
  background: #fff;
  color: #848484;
  font: 700 17px/40px 'DejaVu Sans', Verdana, sans-serif;
}
.chat-icon {
  display: flex;
  align-items: center;
  justify-content: center;
  width: 51px;
  background: #f1f1f1;
}
.chat-label {
  padding: 0 28px 0 15px;
}
</style>
